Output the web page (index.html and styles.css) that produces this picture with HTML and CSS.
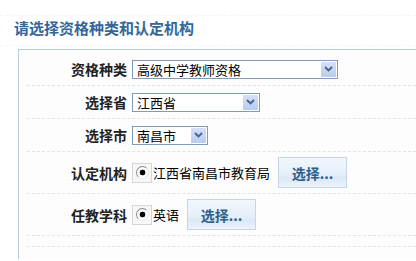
FILE: index.html
```html
<!DOCTYPE html>
<html>
<head>
    <link rel="stylesheet" href="styles.css">
</head>
<body>
    <div class="title">请选择资格种类和认定机构</div>

    <div class="panel">
        <div class="row">
            <span class="label">资格种类</span>
            <span class="select wide"><span class="value">高级中学教师资格</span><span class="arrow"><svg width="9" height="6" viewBox="0 0 9 6"><path d="M1 1 L4.5 4.5 L8 1" fill="none" stroke="#4a5e86" stroke-width="1.8"/></svg></span></span>
        </div>
        <div class="row">
            <span class="label">选择省</span>
            <span class="select mid"><span class="value">江西省</span><span class="arrow"><svg width="9" height="6" viewBox="0 0 9 6"><path d="M1 1 L4.5 4.5 L8 1" fill="none" stroke="#4a5e86" stroke-width="1.8"/></svg></span></span>
        </div>
        <div class="row">
            <span class="label">选择市</span>
            <span class="select small"><span class="value">南昌市</span><span class="arrow"><svg width="9" height="6" viewBox="0 0 9 6"><path d="M1 1 L4.5 4.5 L8 1" fill="none" stroke="#4a5e86" stroke-width="1.8"/></svg></span></span>
        </div>
        <div class="row tall">
            <span class="label">认定机构</span>
            <span class="radio"><span class="dot"></span></span>
            <span class="text">江西省南昌市教育局</span>
            <button class="pick">选择...</button>
        </div>
        <div class="row tall">
            <span class="label">任教学科</span>
            <span class="radio"><span class="dot"></span></span>
            <span class="text">英语</span>
            <button class="pick">选择...</button>
        </div>
        <div class="row spacer"></div>
    </div>
</body>
</html>
```

FILE: styles.css
```css
/* 页面基础 */
body {
    margin: 0;
    background: #fff;
    font-family: "Noto Sans CJK SC", "Liberation Sans", sans-serif;
    overflow: hidden;
}

/* 标题 */
.title {
    margin: 15px 0 0 0;
    padding: 2px 0 0 14px;
    height: 27px;
    border-top: 1px dashed #f3f5f7;
    border-bottom: 1px dashed #f3f5f7;
    color: #336699;
    font-size: 15px;
    font-weight: bold;
    line-height: 20px;
}

/* 表单外框 */
.panel {
    margin: 3px 0 0 18px;
    padding: 3px 0 12px 0;
    border-top: 1px solid #b4cde2;
    border-left: 1px solid #b4cde2;
    background: #fdfdfd;
}

.row {
    display: flex;
    align-items: center;
    height: 32px;
    margin-left: 8px;
    border-bottom: 1px dashed #e3e3e3;
}

.row.tall {
    height: 41px;
}

.row.spacer {
    height: 10px;
}

.label {
    width: 100px;
    margin-right: 5px;
    text-align: right;
    font-size: 14px;
    font-weight: bold;
    color: #222;
}

/* 下拉框 */
.select {
    display: flex;
    align-items: center;
    justify-content: space-between;
    box-sizing: border-box;
    height: 19px;
    border: 1px solid #7f9db9;
    background: #fff;
    padding: 0 1px 0 4px;
    font-size: 13px;
    color: #000;
}

.select.wide { width: 206px; }
.select.mid { width: 128px; }
.select.small { width: 76px; }

.arrow {
    display: flex;
    align-items: center;
    justify-content: center;
    width: 15px;
    height: 15px;
    border-radius: 1px;
    background: linear-gradient(180deg, #d3e0fa, #b7cbf4);
}

/* 单选框 */
.radio {
    display: flex;
    align-items: center;
    justify-content: center;
    box-sizing: border-box;
    width: 20px;
    height: 20px;
    border: 1px solid #d6d6d6;
    background: #f7f7f7;
}

.dot {
    box-sizing: border-box;
    width: 13px;
    height: 13px;
    border-radius: 50%;
    border: 1px solid #8a8a8a;
    border-right-color: #e8e8e8;
    border-bottom-color: #e8e8e8;
    background: radial-gradient(circle, #000 0 2.6px, #fff 3.2px);
}

.text {
    margin-left: 1px;
    font-size: 13px;
    color: #000;
}

/* 选择按钮 */
.pick {
    margin-left: 8px;
    width: 69px;
    height: 31px;
    border: 1px solid #c3d7e8;
    background: linear-gradient(180deg, #f2f7fd 0%, #e6eff9 55%, #dbe8f5 70%, #eef4fb 100%);
    color: #2d5f8e;
    font-family: inherit;
    font-size: 14px;
    font-weight: bold;
    padding: 0;
    cursor: pointer;
}
```
